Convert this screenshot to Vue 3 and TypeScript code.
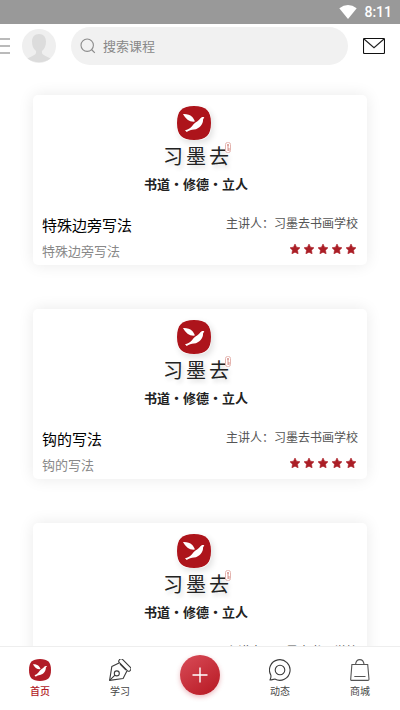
<script setup lang="ts">
interface Course {
  id: number
  title: string
  subtitle: string
  lecturer: string
  stars: number
}

const courses: Course[] = [
  { id: 1, title: '特殊边旁写法', subtitle: '特殊边旁写法', lecturer: '习墨去书画学校', stars: 5 },
  { id: 2, title: '钩的写法', subtitle: '钩的写法', lecturer: '习墨去书画学校', stars: 5 },
  { id: 3, title: '横的写法', subtitle: '横的写法', lecturer: '习墨去书画学校', stars: 5 },
]
</script>

<template>
  <div class="screen">
    <div class="status">
      <svg class="wifi" viewBox="0 0 18 14" aria-hidden="true">
        <path d="M0.3 3.2Q9-3 17.7 3.2L9 14Z" fill="#fff" />
      </svg>
      <span>8:11</span>
    </div>

    <header class="top">
      <button class="menu" type="button" aria-label="菜单">
        <svg viewBox="0 0 10 16" aria-hidden="true">
          <path d="M0 1H10M0 8H10M0 15H10" stroke="#a4a4a4" stroke-width="1.300" fill="none" />
        </svg>
      </button>
      <button class="avatar" type="button" aria-label="个人中心">
        <svg viewBox="0 0 34 34" aria-hidden="true">
          <circle cx="17" cy="17" r="17" fill="#efefef" />
          <path
            d="M17 5C12.500 5 10 8 10 12.500C10 17 11.500 20 14 22C14.500 25 13 26 10 27.200C8 28 6.500 28.700 5.500 29.500C12 34.500 22 34.500 28.500 29.500C27.500 28.700 26 28 24 27.200C21 26 19.500 25 20 22C22.500 20 24 17 24 12.500C24 8 21.500 5 17 5Z"
            fill="#dcdcdc"
          />
        </svg>
      </button>
      <label class="search">
        <svg viewBox="0 0 16 16" aria-hidden="true">
          <circle cx="7.200" cy="7.200" r="6.200" fill="none" stroke="#8c8c8c" stroke-width="1.100" />
          <path d="M11.500 11.500L14.800 14.800" stroke="#8c8c8c" stroke-width="1.200" />
        </svg>
        <input type="search" placeholder="搜索课程" aria-label="搜索课程" />
      </label>
      <button class="mail" type="button" aria-label="消息">
        <svg viewBox="0 0 22 16" aria-hidden="true">
          <rect x="0.500" y="0.500" width="21" height="15" rx="1" fill="none" stroke="#111" stroke-width="1.100" />
          <path d="M1 1L11 9.700L21 1" fill="none" stroke="#222" stroke-width="1.100" />
        </svg>
      </button>
    </header>

    <main class="list">
      <article v-for="course in courses" :key="course.id" class="card">
        <div class="brand">
          <svg class="logo" viewBox="0 0 34 34" aria-hidden="true">
            <path
              d="M17 0C29 0 34 5 34 17C34 29 29 34 17 34C5 34 0 29 0 17C0 5 5 0 17 0Z"
              fill="#ad141b"
            />
            <path d="M6 8C10 7.800 13 8.800 15 10.800C16.300 12.200 17.300 13.600 17.900 15.600C12.600 16.200 9 13.400 6 8Z" fill="#fff" />
            <path
              d="M27.300 11.400C26 10.500 24.200 11 23.200 12.500C22 14.700 18.500 16 16.300 18.500C14.800 20.200 13.800 22.600 8 24.300L9.700 26C12 24.600 14.300 23.800 17 23.600C22.600 22.600 26.200 18.500 26.100 13.200Z"
              fill="#fff"
            />
          </svg>
          <div class="wordmark">
            <span>习</span><span>墨</span><span>去</span>
            <svg class="seal" viewBox="0 0 6 11" aria-hidden="true">
              <rect x="0.500" y="0.500" width="5" height="10" rx="2" fill="#fff" stroke="#e4b4af" />
              <path d="M2 3H4M3 2V5M2 6H4M2 8H4M4 6V9" stroke="#c9685f" stroke-width="0.700" />
            </svg>
          </div>
          <p class="slogan">书道・修德・立人</p>
        </div>
        <div class="info">
          <div class="names">
            <h2>{{ course.title }}</h2>
            <p>{{ course.subtitle }}</p>
          </div>
          <div class="meta">
            <p>主讲人：{{ course.lecturer }}</p>
            <div class="stars">
              <svg v-for="n in course.stars" :key="n" viewBox="0 0 10 10" aria-hidden="true">
                <path
                  d="M5 0L6.500 3.200L10 3.700L7.500 6.200L8.100 9.800L5 8.200L1.900 9.800L2.500 6.200L0 3.700L3.500 3.200Z"
                  fill="#ab1e26"
                  stroke="#ab1e26"
                  stroke-width="0.600"
                />
              </svg>
            </div>
          </div>
        </div>
      </article>
    </main>

    <nav class="tabs">
      <a class="tab active" href="#home">
        <svg viewBox="0 0 34 34" aria-hidden="true">
          <path
            d="M17 0C29 0 34 5 34 17C34 29 29 34 17 34C5 34 0 29 0 17C0 5 5 0 17 0Z"
            fill="#b11c27"
          />
          <path d="M6 8C10 7.800 13 8.800 15 10.800C16.300 12.200 17.300 13.600 17.900 15.600C12.600 16.200 9 13.400 6 8Z" fill="#fff" />
          <path
            d="M28 11C26 10.500 24.200 11 23.200 12.500C22 14.700 18.500 16 16.300 18.500C14.800 20.200 13.800 22.600 8.500 25.300L10.500 27.500C12.500 25.600 14.300 24.800 17 24.600C22.600 23.600 26.200 18.500 26.100 13.200Z"
            fill="#fff"
          />
        </svg>
        <span>首页</span>
      </a>
      <a class="tab" href="#study">
        <svg viewBox="0 0 22 22" fill="none" stroke="#3c3c3c" stroke-width="1.100" aria-hidden="true">
          <rect x="8.300" y="3.800" width="15.200" height="4.400" rx="2" transform="rotate(45 15.900 6)" />
          <path d="M10 3.900L2.800 7.600L0.600 21.400L14.100 19.500L17.900 12" stroke-linejoin="round" />
          <path d="M0.800 21.200L6 16.200M11 5L17 11" />
          <circle cx="7.800" cy="14.400" r="2.500" />
        </svg>
        <span>学习</span>
      </a>
      <button class="add" type="button" aria-label="发布">
        <svg viewBox="0 0 16 16" aria-hidden="true">
          <path d="M8 0.500V15.500M0.500 8H15.500" stroke="#fff" stroke-width="1.400" />
        </svg>
      </button>
      <a class="tab" href="#moments">
        <svg viewBox="0 0 22 22" fill="none" stroke="#3c3c3c" stroke-width="1.100" aria-hidden="true">
          <path
            d="M1.900 16.200A10.300 10.300 0 1 1 5.800 20C4.200 20.300 2.800 20.900 1 20.900C1.900 19.500 2.100 18 1.900 16.200Z"
            stroke-linejoin="round"
          />
          <circle cx="11" cy="11" r="4.800" />
        </svg>
        <span>动态</span>
      </a>
      <a class="tab" href="#shop">
        <svg viewBox="0 0 22 22" fill="none" stroke="#555" stroke-width="1.100" aria-hidden="true">
          <path d="M2.900 5.500H18.700L20 20.200Q20 21.400 18.900 21.400H2.700Q1.600 21.400 1.700 20.200Z" />
          <path d="M6.500 5.500C7 2 8.500 0.600 10.800 0.600C13.100 0.600 14.600 2 15.100 5.500M5.300 17.500H16.500" />
        </svg>
        <span>商城</span>
      </a>
    </nav>
  </div>
</template>

<style>
body {
  margin: 0;
  background: #fff;
}
</style>

<style scoped>
.screen {
  display: flex;
  flex-direction: column;
  height: 100vh;
  overflow: hidden;
  background: #fff;
  color: #000;
  font-family: "Noto Sans CJK SC", sans-serif;
}

.screen * {
  box-sizing: border-box;
}

svg {
  display: block;
  flex: none;
}

h2,
p {
  margin: 0;
  font-weight: 400;
}

button {
  flex: none;
  padding: 0;
  border: 0;
  background: none;
}

.status {
  display: flex;
  flex: none;
  align-items: center;
  justify-content: flex-end;
  gap: 7px;
  height: 24px;
  padding-right: 8px;
  background: #999;
  color: #fff;
  font: 500 14px/24px Roboto, sans-serif;
}

.wifi {
  width: 18px;
  height: 14px;
}

.top {
  display: flex;
  flex: none;
  align-items: center;
  height: 44px;
  padding-right: 15px;
}

.menu svg {
  width: 10px;
  height: 16px;
}

.avatar {
  margin: 0 15px 0 12px;
}

.avatar svg {
  width: 34px;
  height: 34px;
}

.search {
  display: flex;
  flex: 1;
  align-items: center;
  gap: 7px;
  min-width: 0;
  height: 38px;
  padding: 0 9px;
  border-radius: 19px;
  background: #f1f1f1;
}

.search svg {
  width: 16px;
  height: 16px;
}

.search input {
  flex: 1;
  min-width: 0;
  padding: 0;
  border: 0;
  outline: 0;
  background: none;
  font: 13px/20px "Noto Sans CJK SC", sans-serif;
}

.search input::placeholder {
  color: #888;
}

.mail {
  margin-left: 15px;
}

.mail svg {
  width: 22px;
  height: 16px;
}

.list {
  display: flex;
  flex: 1;
  flex-direction: column;
  gap: 44px;
  min-height: 0;
  padding: 27px 33px 0;
  overflow: hidden;
}

.card {
  flex: none;
  padding: 11px 9px 4px;
  border-radius: 5px;
  background: #fff;
  box-shadow: 0 0 16px rgba(0, 0, 0, 0.09);
}

.brand {
  display: flex;
  flex-direction: column;
  align-items: center;
  padding-right: 8px;
}

.logo {
  width: 34px;
  height: 34px;
  margin-right: 4px;
  border-radius: 12px;
  box-shadow: 2px 3px 6px rgba(0, 0, 0, 0.12);
}

.wordmark {
  position: relative;
  display: flex;
  gap: 3px;
  margin-top: 5px;
  color: #222;
  font-size: 20px;
  line-height: 22px;
  text-shadow: 2px 3px 4px rgba(0, 0, 0, 0.15);
}

.seal {
  position: absolute;
  top: -3px;
  right: -2px;
  width: 6px;
  height: 11px;
}

.slogan {
  margin-top: 8px;
  color: #222;
  font-size: 13px;
  font-weight: 700;
  line-height: 18px;
}

.info {
  display: flex;
  justify-content: space-between;
  margin-top: 20px;
}

.names {
  display: grid;
  gap: 4px;
}

.names h2 {
  font-size: 15px;
  line-height: 24px;
}

.names p {
  color: #888;
  font-size: 13px;
  line-height: 20px;
}

.meta {
  display: flex;
  flex-direction: column;
  align-items: flex-end;
  gap: 12px;
  padding-top: 1px;
  color: #555;
  font-size: 12px;
  line-height: 18px;
}

.stars {
  display: flex;
  gap: 4px;
  padding-right: 2px;
}

.stars svg {
  width: 10px;
  height: 10px;
}

.tabs {
  display: grid;
  flex: none;
  grid-template-columns: repeat(5, 1fr);
  align-items: start;
  height: 64px;
  border-top: 1px solid #eee;
  background: #fff;
}

.tab {
  display: flex;
  flex-direction: column;
  align-items: center;
  gap: 2px;
  padding-top: 12px;
  color: #444;
  font-size: 10px;
  line-height: 16px;
  text-decoration: none;
}

.tab svg {
  width: 22px;
  height: 22px;
}

.tab.active {
  color: #b11c27;
  font-weight: 500;
}

.add {
  display: grid;
  place-items: center;
  justify-self: center;
  width: 40px;
  height: 40px;
  margin-top: 8px;
  border-radius: 50%;
  background: linear-gradient(145deg, #d94c58, #b61822);
  box-shadow: 0 2px 5px rgba(190, 30, 45, 0.3);
}

.add svg {
  width: 16px;
  height: 16px;
}
</style>
